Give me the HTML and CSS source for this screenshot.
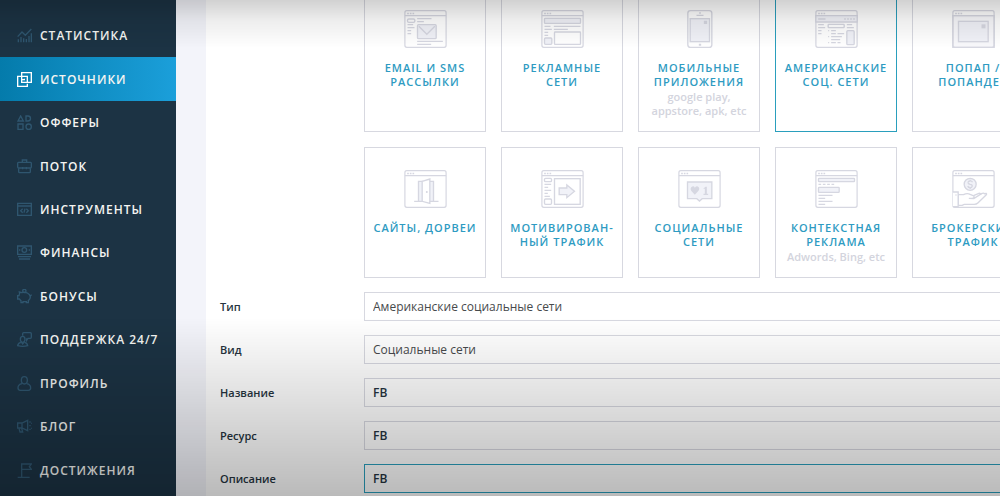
FILE: index.html
```html
<!DOCTYPE html>
<html lang="ru">
<head>
<meta charset="utf-8">
<title>Источники</title>
<link rel="stylesheet" href="styles.css">
</head>
<body>
<svg class="defs" aria-hidden="true">
  <symbol id="window" viewBox="0 0 128 114">
    <rect x="2" y="2" width="124" height="110" rx="6"/>
    <path d="M2 17H126"/>
    <path class="solid" d="M9 8h5v5h-5zM17 8h5v5h-5zM25 8h5v5h-5z"/>
  </symbol>
</svg>
<div class="app">
  <nav class="sidebar">
    <a class="item" href="#"><svg viewBox="0 0 45 45"><path d="M2 26L15 12L25 22L43 3M4 43V34M12 43V27M20 43V31M28 43V33M36 43V24M43 43V16"/></svg>Статистика</a>
    <a class="item active" href="#" aria-current="page"><svg viewBox="0 0 45 45"><path d="M14 2H43V31H14ZM10 13H2V43H31V35M10 13H31V31M14 23V23H22V20"/></svg>Источники</a>
    <a class="item" href="#"><svg viewBox="0 0 45 45"><path d="M11 3L19 18H3ZM27 3H33a7 7 0 0 1 0 15H27ZM3 27H18V43H3Z"/><circle cx="35" cy="35" r="8"/></svg>Офферы</a>
    <a class="item" href="#"><svg viewBox="0 0 45 45"><path d="M4 10H41Q43 10 43 13V24Q43 27 40 27H5Q2 27 2 24V13Q2 10 4 10ZM16 9V3H29V9M5 27V38Q5 41 8 41H37Q40 41 40 38V27M17 24V31M28 24V31"/></svg>Поток</a>
    <a class="item" href="#"><svg viewBox="0 0 45 45"><path d="M2 4H43V40H2ZM2 12H43M17 20L11 26L17 32M28 20L34 26L28 32M24 20L21 32"/></svg>Инструменты</a>
    <a class="item" href="#"><svg viewBox="0 0 45 45"><path d="M2 3H43V28H2ZM3 35H42M6 42H39M6 15H10M35 15H39"/><circle cx="22" cy="15" r="7"/></svg>Финансы</a>
    <a class="item" href="#"><svg viewBox="0 0 45 45"><path d="M8 15L7 9L14 11Q22 8 31 12Q39 16 40 24Q40 31 34 35V41H28V38H18V41H12V35L7 30H2V20H6Q6 17 8 15M40 21L44 17"/><circle cx="22" cy="6" r="5"/></svg>Бонусы</a>
    <a class="item" href="#"><svg viewBox="0 0 45 45"><path d="M17 11V5Q17 2 20 2H40Q43 2 43 5V16Q43 19 40 19H33L29 25V19M12 31Q3 33 2 41Q17 45 32 41Q31 33 23 31"/><ellipse cx="17" cy="22" rx="7" ry="9"/><path d="M12 29L17 36L23 29"/></svg>Поддержка 24/7</a>
    <a class="item" href="#"><svg viewBox="0 0 45 45"><ellipse cx="22" cy="13" rx="9" ry="11"/><path d="M15 23Q3 25 3 36Q3 42 10 43H34Q41 42 41 36Q41 25 29 23"/></svg>Профиль</a>
    <a class="item" href="#"><svg viewBox="0 0 45 45"><path d="M32 4L15 12H2V27H15L32 35ZM15 12V27M6 28L9 39H17L14 28M39 7V11M39 18V22M39 29V33M44 11V14M44 26V29"/></svg>Блог</a>
    <a class="item" href="#"><svg viewBox="0 0 45 45"><path d="M14 43V3H43L37 11L43 19H14M2 43H38"/></svg>Достижения</a>
  </nav>
  <main class="page">
    <div class="content">
      <div class="cards">
        <button class="card" type="button">
          <svg viewBox="0 0 128 114"><use href="#window"/><rect x="10" y="27" width="22" height="10" rx="4"/><path d="M39 26H82M39 35H59M10 44H27M10 53H31M10 62H21M10 71H21M39 94H116M39 103H81"/><rect class="tint" x="40" y="44" width="56" height="42" rx="3"/><path d="M44 49L68 73L92 49"/></svg>
          <span class="title">Email и SMS<br>рассылки</span>
        </button>
        <button class="card" type="button">
          <svg viewBox="0 0 128 114"><use href="#window"/><rect class="tint" x="10" y="25" width="108" height="15" rx="2"/><path d="M10 49H28M38 49H118M10 58H32M38 58H80M10 67H21M10 76H21"/><rect class="tint" x="10" y="84" width="22" height="19" rx="3"/><rect x="40" y="66" width="78" height="37" rx="2"/></svg>
          <span class="title">Рекламные<br>сети</span>
        </button>
        <button class="card" type="button">
          <svg viewBox="0 0 128 114"><rect x="29" y="2" width="72" height="110" rx="8"/><path d="M55 16H76M63 9H68"/><rect class="tint" x="36" y="26" width="58" height="69"/><path class="solid" d="M77 32h10v10h-10zM62 101h7v6h-7z"/></svg>
          <span class="title">Мобильные<br>приложения</span>
          <span class="note">google play,<br>appstore, apk, etc</span>
        </button>
        <button class="card selected" type="button" aria-pressed="true">
          <svg viewBox="0 0 128 114"><use href="#window"/><path class="tint" d="M2 17H126V36H2Z"/><path d="M9 27H31M87 27h5M96 27h5M105 27h5M114 27h5M9 44H26M9 53H30M9 62H19M9 71H19M95 44H111M95 53H116M48 62H62M48 71H62M48 80H80M48 89H75M48 98H62M39 62h3M39 80h3M39 98h3M67 71H87M67 98H76"/><rect x="39" y="43" width="48" height="10" rx="2"/><rect class="tint" x="95" y="62" width="22" height="42" rx="3"/></svg>
          <span class="title">Американские<br>соц. сети</span>
        </button>
        <button class="card" type="button">
          <svg viewBox="0 0 128 114"><path class="pale" d="M2 17H126V112H2Z"/><use href="#window"/><rect class="tint" x="19" y="34" width="89" height="61"/><path class="solid" d="M88 43h12v12h-12z"/></svg>
          <span class="title">Попап /<br>попандер</span>
        </button>
        <button class="card" type="button">
          <svg viewBox="0 0 128 114"><use href="#window"/><path class="tint" d="M43 94V34H88V94"/><path class="sheet" d="M54 34L77 27V100L54 94Z"/><path d="M30 94H56M77 94H103"/><circle class="solid" cx="68" cy="66" r="3"/></svg>
          <span class="title">Сайты, дорвеи</span>
        </button>
        <button class="card" type="button">
          <svg viewBox="0 0 128 114"><use href="#window"/><rect x="10" y="25" width="21" height="10" rx="3"/><path d="M10 43H30M10 52H21M10 61H30M10 70H20M10 79H26"/><rect x="10" y="87" width="21" height="16" rx="3"/><rect x="40" y="26" width="77" height="77"/><path class="tint" d="M54 54H77V45L100 64L77 83V74H54Z"/></svg>
          <span class="title">Мотивирован-<br>ный трафик</span>
        </button>
        <button class="card" type="button">
          <svg viewBox="0 0 128 114"><use href="#window"/><path class="tint" d="M28 36H101V86H72L64 93L56 86H28Z"/><path class="solid" d="M50 74L39 62Q35 54 41 50Q47 47 50 53Q55 47 60 50Q66 54 61 62ZM75 56L82 50H86V71H90V75H76V71H80V56Z"/></svg>
          <span class="title">Социальные<br>сети</span>
        </button>
        <button class="card" type="button">
          <svg viewBox="0 0 128 114"><use href="#window"/><rect class="tint" x="10" y="25" width="108" height="10" rx="2"/><path d="M10 43h8M23 43h8M36 43h8M49 43h8M10 76H52M10 85H30M10 94H52M10 103H30"/><rect class="tint" x="10" y="52" width="62" height="15" rx="2"/></svg>
          <span class="title">Контекстная<br>реклама</span>
          <span class="note">Adwords, Bing, etc</span>
        </button>
        <button class="card" type="button">
          <svg viewBox="0 0 128 114"><use href="#window"/><circle class="tint" cx="54" cy="43" r="18"/><path d="M61 37Q59 32 53 33Q47 34 48 39Q49 42 54 43Q61 44 60 49Q59 53 54 53Q48 53 47 48M54 29V33M54 53V57"/><path class="sheet" d="M18 74H34Q45 68 54 73L65 78Q68 84 60 85H50L65 86L88 71Q94 68 97 71L102 70Q105 72 101 76L77 99Q73 103 66 103H36L30 106H18Z"/><path d="M64 77L80 70Q86 69 86 74"/><path class="sheet" d="M2 66H18V110H2"/><path class="solid" d="M10 73h3v4h-3z"/></svg>
          <span class="title">Брокерский<br>трафик</span>
        </button>
      </div>
      <form class="form">
        <label for="type">Тип</label>
        <select id="type"><option>Американские социальные сети</option></select>
        <label for="kind">Вид</label>
        <select id="kind"><option>Социальные сети</option></select>
        <label for="name">Название</label>
        <input id="name" type="text" value="FB">
        <label for="resource">Ресурс</label>
        <input id="resource" type="text" value="FB">
        <label for="about">Описание</label>
        <input id="about" class="focused" type="text" value="FB">
      </form>
    </div>
  </main>
</div>
</body>
</html>
```
FILE: styles.css
```css
* { box-sizing: border-box; }

body {
  margin: 0;
  font-family: "Open Sans", "Noto Sans", sans-serif;
  font-size: 12px;
  font-weight: 600;
  overflow: hidden;
}

.defs { display: none; }

.app {
  display: flex;
  height: 100vh;
}

/* shade at the top and bottom of the window */
.app::after {
  content: "";
  position: fixed;
  inset: 0;
  pointer-events: none;
  background:
    linear-gradient(rgba(0, 0, 0, .18), rgba(0, 0, 0, .07) 20px, transparent 48px),
    linear-gradient(transparent 64%, rgba(0, 0, 0, .27));
}

.sidebar {
  display: flex;
  flex-direction: column;
  flex: 0 0 176px;
  padding: 14px 0 4px;
  background: #1c3344;
}

.item {
  display: flex;
  flex: 1;
  align-items: center;
  gap: 8px;
  min-height: 43px;
  padding-left: 17px;
  color: #f4f5f2;
  letter-spacing: 1px;
  text-decoration: none;
  text-transform: uppercase;
  white-space: nowrap;
}

.item svg {
  width: 15px;
  height: 15px;
  fill: none;
  stroke: #2f566f;
  stroke-width: 4;
}

.item.active { background: linear-gradient(90deg, #047bab, #1b9fda); }
.item.active svg { stroke: #fff; }

.page {
  flex: 1;
  min-width: 0;
  overflow: hidden;
  border-left: 30px solid #f3f4fa;
  background: #fff;
}

.content {
  min-width: 830px;
  margin-top: -13px;
  padding-left: 14px;
}

.cards {
  display: grid;
  grid-template-columns: repeat(5, 122px);
  gap: 15px;
  margin: 0 0 14px 144px;
}

.card {
  display: flex;
  flex-direction: column;
  align-items: center;
  padding: 22px 0 13px;
  border: 1px solid #d7d8e0;
  background: transparent;
  font: inherit;
  line-height: 14px;
}

.card.selected { border-color: #2a9fbd; }

.card svg {
  width: 43px;
  height: 38px;
  margin-bottom: 13px;
  fill: none;
  stroke: #d6d7e1;
  stroke-width: 4;
}

.card .tint { fill: #f1f2f8; }
.card .pale { fill: #f8f8fb; }
.card .sheet { fill: #fff; }
.solid { fill: #d6d7e1; stroke: none; }

.title {
  color: #2e9bc2;
  font-size: 11px;
  letter-spacing: 1px;
  text-transform: uppercase;
  white-space: nowrap;
}

.note {
  margin-top: 1px;
  color: #d3d4dd;
  font-size: 11px;
}

.form {
  display: grid;
  grid-template-columns: 144px 1fr;
  row-gap: 14px;
  align-items: center;
  color: #263440;
}

.form label { font-size: 11px; }

.form input,
.form select {
  width: 100%;
  height: 29px;
  padding: 0 8px;
  border: 1px solid #d7d8e0;
  border-radius: 0;
  outline: 0;
  appearance: none;
  background: transparent;
  color: #263440;
  font: inherit;
}

.form select {
  color: #474a4c;
  font-weight: 500;
}

.form .focused { border-color: #2a9fbd; }
```
